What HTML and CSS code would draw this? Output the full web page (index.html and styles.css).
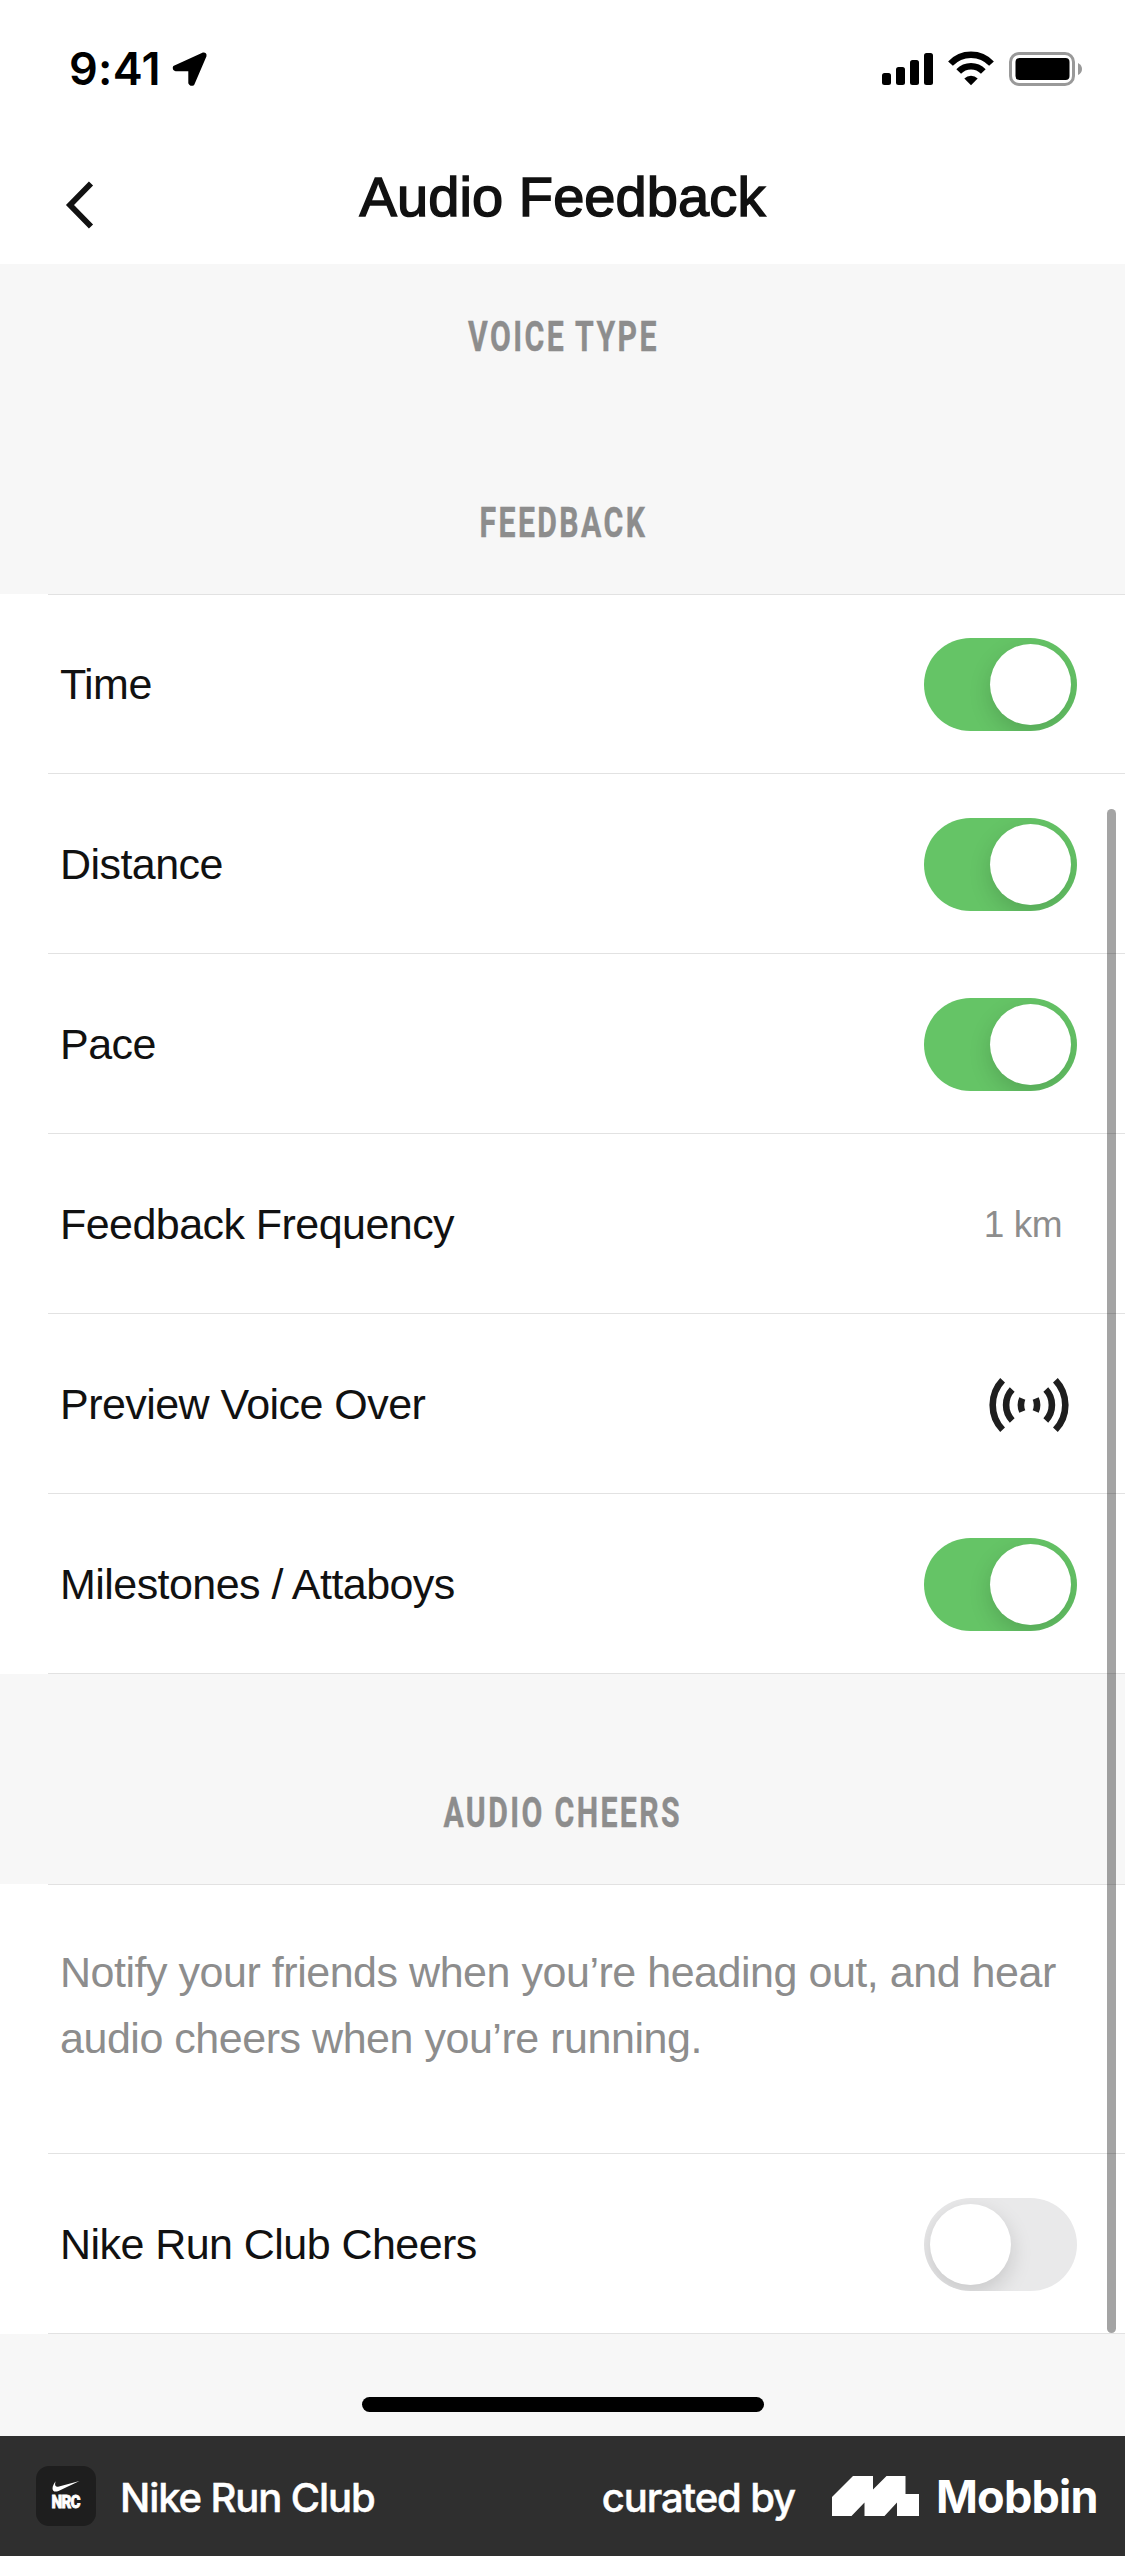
FILE: index.html
```
<!DOCTYPE html>
<html lang="en">
<head>
<meta charset="utf-8">
<title>Audio Feedback</title>
<link rel="stylesheet" href="styles.css">
</head>
<body>
<div class="screen">
  <div class="status">
    <div class="status-left">
      <span class="clock">9:41</span>
      <svg class="locate" width="36" height="36" viewBox="0 0 36 36"><path d="M2.500 16 31 3Q33.500 2.500 33 5L21 33Q18.600 34 17.800 32V18.800H4Q1.500 18 2.500 16Z" stroke="#000" stroke-width="3" stroke-linejoin="round"/></svg>
    </div>
    <svg class="indicators" width="202" height="36" viewBox="0 0 202 36">
      <rect x="1" y="22" width="9" height="12" rx="2.500"/>
      <rect x="15" y="16" width="9" height="18" rx="2.500"/>
      <rect x="29" y="9" width="9" height="25" rx="2.500"/>
      <rect x="43" y="2" width="9" height="32" rx="2.500"/>
      <g fill="none" stroke="#000" stroke-width="6.500">
        <path d="M69.500 12.600A28 28 0 0 1 110.500 12.600"/>
        <path d="M77.700 20.500A17 17 0 0 1 102.300 20.500"/>
      </g>
      <path d="M90 34.300 83.300 27.400A9.800 9.800 0 0 1 96.700 27.400Z"/>
      <rect x="129.500" y="2.500" width="63" height="31" rx="8.500" fill="none" stroke="#999" stroke-width="3"/>
      <rect x="134.500" y="7" width="54" height="22" rx="4"/>
      <path d="M197 12V24Q201 22 201 18T197 12Z" fill="#999"/>
    </svg>
  </div>
  <header class="nav">
    <svg class="back" width="30" height="48" viewBox="0 0 30 48"><path d="M26 2.500 5 24 26 45.500" fill="none" stroke="#111" stroke-width="5.800"/></svg>
    <h1 class="title">Audio Feedback</h1>
  </header>

  <main class="content">
    <h2 class="section voice"><span>VOICE TYPE</span></h2>
    <h2 class="section feedback"><span>FEEDBACK</span></h2>
    <div class="list">
      <div class="row"><span class="label">Time</span><i class="switch on"></i></div>
      <div class="row"><span class="label">Distance</span><i class="switch on"></i></div>
      <div class="row"><span class="label">Pace</span><i class="switch on"></i></div>
      <div class="row"><span class="label">Feedback Frequency</span><span class="value">1 km</span></div>
      <div class="row"><span class="label">Preview Voice Over</span>
        <svg class="waves" width="80" height="56" viewBox="0 0 80 56" fill="none" stroke="#1e1e1e" stroke-width="6.600">
          <path d="M13.600 3.200A36 36 0 0 0 13.600 52.800M23.200 12.600A22.500 22.500 0 0 0 23.200 43.400M33.300 21.500Q30.500 28 33.300 34.500"/>
          <path d="M66.400 3.200A36 36 0 0 1 66.400 52.800M56.800 12.600A22.500 22.500 0 0 1 56.800 43.400M46.700 21.500Q49.500 28 46.700 34.500"/>
        </svg>
      </div>
      <div class="row"><span class="label">Milestones / Attaboys</span><i class="switch on"></i></div>
    </div>
    <h2 class="section cheers"><span>AUDIO CHEERS</span></h2>
    <div class="list">
      <p class="note">Notify your friends when you’re heading out, and hear<br>audio cheers when you’re running.</p>
      <div class="row"><span class="label">Nike Run Club Cheers</span><i class="switch"></i></div>
    </div>
    <div class="scrollbar"></div>
  </main>

  <div class="home"><div class="home-bar"></div></div>

  <footer class="footer">
    <div class="app-icon">
      <svg class="swoosh" width="28" height="11" viewBox="0 0 28 11"><path d="M27.500 0 6.500 10C0 12.500-1.500 7 3.600 .3C2.300 5 3.500 6.300 7 5.500Z" fill="#fff"/></svg>
      <span class="nrc">NRC</span>
    </div>
    <span class="app-name">Nike Run Club</span>
    <span class="curated">curated by</span>
    <svg class="mobbin-mark" width="87" height="40" viewBox="0 0 87 40"><path d="M0 21 21 0H41V13.500L54.500 0H73.500V18H87V40H65V26.500L52.500 40H32.500V26.500L19.500 40H0Z" fill="#fff"/></svg>
    <span class="mobbin">Mobbin</span>
  </footer>
</div>
</body>
</html>
```
FILE: styles.css
```
* { box-sizing: border-box; }
body { margin: 0; background: #fff; }
.screen {
  width: 1125px;
  height: 2556px;
  display: flex;
  flex-direction: column;
  font-family: "Liberation Sans", Arial, sans-serif;
  color: #111;
  overflow: hidden;
}
svg { display: block; flex: none; }

.status {
  height: 138px;
  display: flex;
  justify-content: space-between;
  align-items: center;
  padding: 0 42px 0 69px;
}
.status-left { display: flex; align-items: center; gap: 12px; }
.clock {
  width: 91px;
  font: 600 45px/46px Inter, sans-serif;
  letter-spacing: 0.3px;
  color: #000;
  white-space: nowrap;
}

.nav {
  height: 126px;
  display: grid;
  grid-template-columns: 65px 1fr 65px;
  padding-bottom: 9px;
  align-items: center;
}
.back { margin: 16px 0 0 65px; }
.title {
  margin: 0;
  text-align: center;
  font-size: 56px;
  line-height: 64px;
  font-weight: 400;
  letter-spacing: 0.1px;
  -webkit-text-stroke: 1.5px #111;
}

.content { position: relative; background: #f7f7f7; }
.section {
  margin: 0;
  display: flex;
  justify-content: center;
  color: #8d8d8d;
  font: 700 42px/50px Roboto, sans-serif;
  letter-spacing: 3.3px;
}
.section span {
  transform: scaleX(0.72);
  margin-right: -1px;
  white-space: nowrap;
  -webkit-text-stroke: 0.4px #8d8d8d;
}
.voice { height: 186px; padding-top: 48px; }
.feedback { height: 144px; padding-top: 48px; }
.cheers { height: 210px; padding-top: 114px; }

.list {
  background: #fff linear-gradient(#e2e2e2, #e2e2e2) no-repeat 48px 0 / 100% 1px;
  font-size: 43px;
  letter-spacing: -0.55px;
}
.row {
  height: 180px;
  margin-left: 48px;
  padding: 0 48px 0 12px;
  border-bottom: 1px solid #e2e2e2;
  display: flex;
  align-items: center;
  justify-content: space-between;
}
.label { padding-top: 2px; }
.value { margin-right: 15px; padding-top: 2px; font-size: 37px; letter-spacing: -0.5px; color: #8d8d8d; }
.waves { margin: 2px 8px 0 0; }
.switch {
  width: 153px;
  height: 93px;
  padding: 6px;
  border-radius: 47px;
  background: #e9e9ea;
  display: flex;
  overflow: hidden;
  margin-top: 2px;
}
.switch::before {
  content: "";
  width: 81px;
  height: 81px;
  border-radius: 50%;
  background: #fff;
  box-shadow: 0 8px 22px rgba(0, 0, 0, 0.15);
}
.switch.on { background: #65c466; justify-content: flex-end; }
.note {
  height: 270px;
  margin: 0 0 0 48px;
  padding: 55px 0 0 12px;
  border-bottom: 1px solid #e2e2e2;
  line-height: 66px;
  letter-spacing: -0.47px;
  color: #8d8d8d;
  white-space: nowrap;
}
.scrollbar {
  position: absolute;
  top: 545px;
  right: 9px;
  width: 9px;
  height: 1524px;
  border-radius: 5px;
  background: rgba(0, 0, 0, 0.355);
}

.home {
  flex: 1;
  padding-top: 63px;
  background: #f7f7f7;
  display: flex;
  justify-content: center;
}
.home-bar { width: 402px; height: 15px; border-radius: 8px; background: #000; }

.footer {
  height: 120px;
  display: flex;
  align-items: center;
  padding: 0 27px 0 36px;
  background: #2f2f2f;
  color: #fff;
  font: 500 40px/48px Inter, sans-serif;
  white-space: nowrap;
}
.app-icon {
  width: 60px;
  height: 60px;
  border-radius: 13px;
  background: #1e1e1e;
  display: flex;
  flex-direction: column;
  align-items: center;
  padding-top: 15px;
  gap: 2px;
}
.nrc { font: 900 19px/16px Roboto, sans-serif; letter-spacing: -1px; transform: scaleX(0.8); -webkit-text-stroke: 0.8px #fff; }
.app-name { margin: 3px 0 0 24px; letter-spacing: -1.1px; -webkit-text-stroke: 0.5px #fff; }
.curated { margin: 3px 0 0 auto; letter-spacing: -1.1px; -webkit-text-stroke: 0.5px #fff; }
.mobbin-mark { margin-left: 37px; }
.mobbin { width: 162px; margin: 1px 0 0 17px; font-size: 45px; font-weight: 700; letter-spacing: -0.8px; }
```
